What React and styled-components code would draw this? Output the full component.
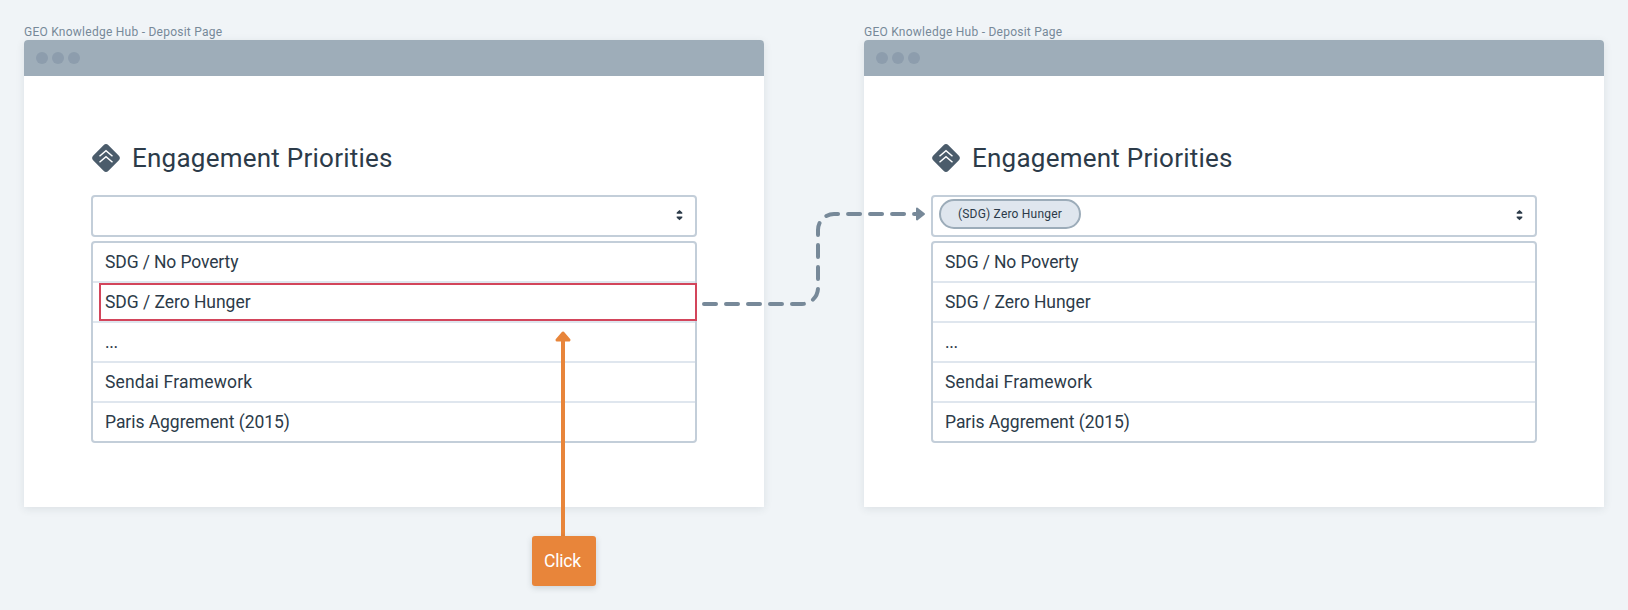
import React from "react";
import styled, { createGlobalStyle } from "styled-components";

const GlobalStyle = createGlobalStyle`
  * { box-sizing: border-box; }
  body {
    margin: 0;
    background: #f0f4f7;
    font-family: Roboto, "Liberation Sans", sans-serif;
    color: #2c3b49;
  }
`;

const Board = styled.main`
  position: relative;
  display: flex;
  gap: 100px;
  width: 1628px;
  height: 610px;
  padding: 24px;
  overflow: hidden;
`;

const Frame = styled.section`
  display: flex;
  flex-direction: column;
  width: 740px;
`;

const FrameLabel = styled.div`
  height: 16px;
  line-height: 16px;
  font-size: 12px;
  letter-spacing: 0.25px;
  color: #778999;
  white-space: nowrap;
`;

const Window = styled.div`
  height: 467px;
  background: #fff;
  border-radius: 4px 4px 0 0;
  box-shadow: 0 2px 8px rgba(44, 59, 73, 0.1);
`;

const TitleBar = styled.div`
  display: flex;
  align-items: center;
  gap: 4px;
  height: 36px;
  padding-left: 12px;
  background: #9eadb9;
  border-radius: 4px 4px 0 0;
`;

const Dot = styled.span`
  width: 12px;
  height: 12px;
  border-radius: 50%;
  background: #8d9dad;
`;

const Content = styled.div`
  display: flex;
  flex-direction: column;
  width: 606px;
  margin-left: 67px;
  padding-top: 64px;
`;

const Heading = styled.div`
  display: flex;
  align-items: center;
  gap: 12px;
  height: 36px;
  padding-left: 1px;
`;

const Title = styled.h1`
  margin: 0;
  font-size: 26px;
  line-height: 36px;
  font-weight: 400;
  letter-spacing: 0.24px;
  white-space: nowrap;
`;

const Field = styled.div`
  display: flex;
  align-items: flex-start;
  justify-content: space-between;
  height: 42px;
  margin-top: 19px;
  padding: 2px 12px 0 6px;
  border: 2px solid #c3ced9;
  border-radius: 4px;
`;

const Chip = styled.span`
  display: flex;
  align-items: center;
  justify-content: center;
  width: 142px;
  height: 30px;
  border: 2px solid #9cacb9;
  border-radius: 15px;
  background: #dfe6ee;
  font-size: 12px;
  letter-spacing: 0.2px;
  white-space: nowrap;
`;

const Caret = styled.svg`
  width: 7px;
  height: 12px;
  margin: 10px 0 0 auto;
`;

const List = styled.ul`
  display: flex;
  flex-direction: column;
  list-style: none;
  height: 202px;
  margin: 4px 0 0;
  padding: 0;
  border: 2px solid #c3ced9;
  border-radius: 4px;
`;

const Item = styled.li`
  position: relative;
  height: 40px;
  padding-left: 12px;
  line-height: 38px;
  font-size: 17.5px;
  letter-spacing: ${(p) => p.$tracking}px;
  border-bottom: 2px solid #dfe6ee;
  white-space: nowrap;

  &:last-child {
    height: 38px;
    border-bottom: 0;
  }
`;

const Highlight = styled.span`
  position: absolute;
  top: 0;
  left: 6px;
  right: -2px;
  height: 38px;
  border: 2px solid #d3455b;
`;

const Overlay = styled.svg`
  position: absolute;
  inset: 0;
  pointer-events: none;
`;

const ClickNote = styled.div`
  position: absolute;
  left: 532px;
  top: 536px;
  display: flex;
  align-items: center;
  justify-content: center;
  width: 64px;
  height: 50px;
  padding-right: 3px;
  border-radius: 3px;
  background: #e8853a;
  box-shadow: 0 2px 6px rgba(44, 59, 73, 0.18);
  color: #fff;
  font-size: 17.5px;
  letter-spacing: -0.15px;
`;

const OPTIONS = [
  { text: "SDG / No Poverty", tracking: -0.12 },
  { text: "SDG / Zero Hunger", tracking: -0.04 },
  { text: "...", tracking: -0.4 },
  { text: "Sendai Framework", tracking: 0.18 },
  { text: "Paris Aggrement (2015)", tracking: -0.05 },
];

function PriorityIcon() {
  return (
    <svg width="28" height="28" viewBox="0 0 28 28">
      <rect x="3.3" y="3.3" width="21.4" height="21.4" rx="3.5" fill="#4b5c6b" transform="rotate(45 14 14)" />
      <path d="M7.5 12.2 14 6.7l6.5 5.5M7.5 18.2 14 12.7l6.5 5.5" fill="none" stroke="#fff" strokeWidth="1.5" />
    </svg>
  );
}

function DepositWindow({ selected, highlighted }) {
  return (
    <Frame>
      <FrameLabel>GEO Knowledge Hub - Deposit Page</FrameLabel>
      <Window>
        <TitleBar>
          <Dot />
          <Dot />
          <Dot />
        </TitleBar>
        <Content>
          <Heading>
            <PriorityIcon />
            <Title>Engagement Priorities</Title>
          </Heading>
          <Field>
            {selected && <Chip>{selected}</Chip>}
            <Caret viewBox="0 0 7 12">
              <path d="M3.5 1 6.3 3.5V4.8H.7V3.5ZM.7 7.4h5.6v1.3L3.5 11.2.7 8.7Z" fill="#2c3b49" />
            </Caret>
          </Field>
          <List>
            {OPTIONS.map((option, index) => (
              <Item key={option.text} $tracking={option.tracking}>
                {option.text}
                {index === highlighted && <Highlight />}
              </Item>
            ))}
          </List>
        </Content>
      </Window>
    </Frame>
  );
}

export default function App() {
  return (
    <>
      <GlobalStyle />
      <Board>
        <DepositWindow highlighted={1} />
        <DepositWindow selected="(SDG) Zero Hunger" />
        <Overlay width="1628" height="610" viewBox="0 0 1628 610">
          <path
            d="M704 304H802A16 16 0 0 0 818 288V230A16 16 0 0 1 834 214H918"
            fill="none"
            stroke="#778999"
            strokeWidth="4"
            strokeLinecap="round"
            strokeDasharray="12 10"
          />
          <path d="M917 208.5 924 214 917 219.5Z" fill="#778999" stroke="#778999" strokeWidth="2" strokeLinejoin="round" />
          <path d="M563 537V340" stroke="#e8853a" strokeWidth="4" />
          <path d="M563 333 569 340H557Z" fill="#e8853a" stroke="#e8853a" strokeWidth="3" strokeLinejoin="round" />
        </Overlay>
        <ClickNote>Click</ClickNote>
      </Board>
    </>
  );
}
